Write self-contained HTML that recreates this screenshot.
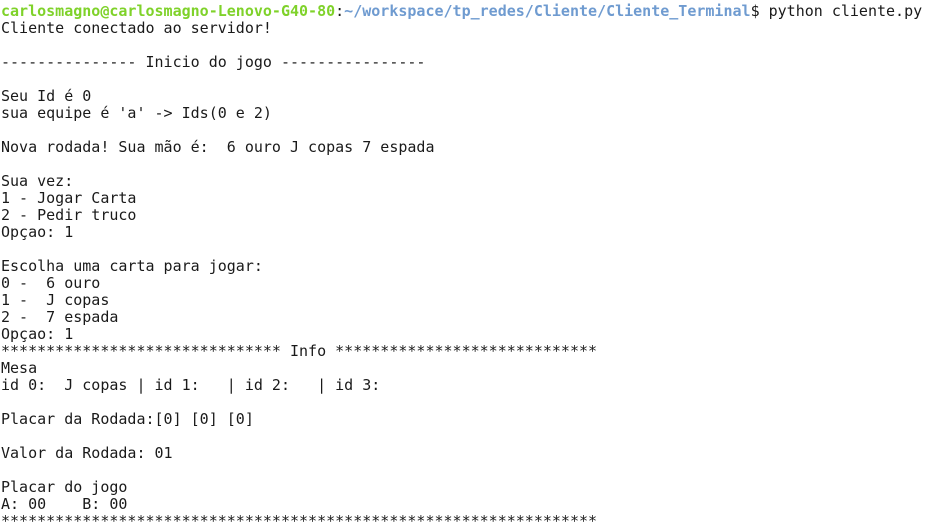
<!DOCTYPE html>
<html><head><meta charset="utf-8"><style>
html,body{margin:0;padding:0;background:#fff;width:930px;height:529px;overflow:hidden}
pre{margin:0;position:absolute;left:1px;top:3px;font-family:"DejaVu Sans Mono","Liberation Mono",monospace;font-size:15px;line-height:17px;color:#1a1a1a;white-space:pre}
.g{color:#7fd22a;font-weight:bold}.b{color:#6f9bd0;font-weight:bold}
</style></head><body>
<pre><span class="g">carlosmagno@carlosmagno-Lenovo-G40-80</span>:<span class="b">~/workspace/tp_redes/Cliente/Cliente_Terminal</span>$ python cliente.py
Cliente conectado ao servidor!

--------------- Inicio do jogo ----------------

Seu Id é 0
sua equipe é 'a' -&gt; Ids(0 e 2)

Nova rodada! Sua mão é:  6 ouro J copas 7 espada

Sua vez:
1 - Jogar Carta
2 - Pedir truco
Opçao: 1

Escolha uma carta para jogar:
0 -  6 ouro
1 -  J copas
2 -  7 espada
Opçao: 1
******************************* Info *****************************
Mesa
id 0:  J copas | id 1:   | id 2:   | id 3:

Placar da Rodada:[0] [0] [0]

Valor da Rodada: 01

Placar do jogo
A: 00    B: 00
******************************************************************</pre>
</body></html>
